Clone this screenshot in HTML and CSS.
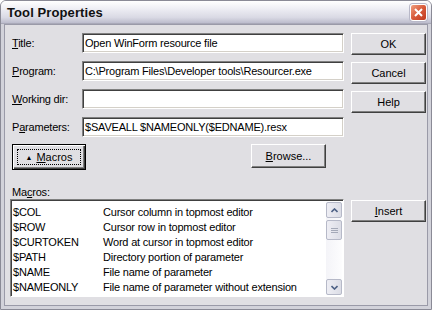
FILE: index.html
```html
<!DOCTYPE html>
<html lang="en">
<head>
  <meta charset="UTF-8">
  <title>Tool Properties</title>
  <link rel="stylesheet" href="styles.css">
</head>
<body>
  <div class="window">
    <div class="titlebar">
      <span class="title">Tool Properties</span>
      <span class="close">
        <svg width="9" height="9" viewBox="0 0 9 9"><path d="M1 1 L8 8 M8 1 L1 8" stroke="#fff" stroke-width="2"/></svg>
      </span>
    </div>

    <div class="client">
      <div class="form">
        <div class="row">
          <label><u>T</u>itle:</label>
          <div class="field">Open WinForm resource file</div>
        </div>
        <div class="row">
          <label><u>P</u>rogram:</label>
          <div class="field">C:\Program Files\Developer tools\Resourcer.exe</div>
        </div>
        <div class="row">
          <label><u>W</u>orking dir:</label>
          <div class="field"></div>
        </div>
        <div class="row">
          <label>P<u>a</u>rameters:</label>
          <div class="field">$SAVEALL $NAMEONLY($EDNAME).resx</div>
        </div>

        <div class="actions">
          <button class="btn btn-default"><span class="focus"><span class="tri">&#9650;</span> <u>M</u>acros</span></button>
          <button class="btn btn-browse"><u>B</u>rowse...</button>
        </div>

        <div class="list-label">Ma<u>c</u>ros:</div>
        <div class="listbox">
          <div class="items">
            <div class="item"><span class="name">$COL</span><span>Cursor column in topmost editor</span></div>
            <div class="item"><span class="name">$ROW</span><span>Cursor row in topmost editor</span></div>
            <div class="item"><span class="name">$CURTOKEN</span><span>Word at cursor in topmost editor</span></div>
            <div class="item"><span class="name">$PATH</span><span>Directory portion of parameter</span></div>
            <div class="item"><span class="name">$NAME</span><span>File name of parameter</span></div>
            <div class="item"><span class="name">$NAMEONLY</span><span>File name of parameter without extension</span></div>
          </div>
          <div class="scrollbar">
            <div class="sb-btn">
              <svg width="7" height="5" viewBox="0 0 7 5"><path d="M0.5 4 L3.5 1 L6.5 4" fill="none" stroke="#4d6185" stroke-width="1.6"/></svg>
            </div>
            <div class="sb-thumb">
              <svg width="7" height="7" viewBox="0 0 7 7"><path d="M0 1.5 H7 M0 3.5 H7 M0 5.5 H7" stroke="#a4a9b8" stroke-width="1"/></svg>
            </div>
            <div class="sb-track"></div>
            <div class="sb-btn">
              <svg width="7" height="5" viewBox="0 0 7 5"><path d="M0.5 1 L3.5 4 L6.5 1" fill="none" stroke="#4d6185" stroke-width="1.6"/></svg>
            </div>
          </div>
        </div>
      </div>

      <div class="side">
        <button class="btn">OK</button>
        <button class="btn">Cancel</button>
        <button class="btn">Help</button>
        <button class="btn btn-insert"><u>I</u>nsert</button>
      </div>
    </div>
  </div>
</body>
</html>
```

FILE: styles.css
```css
body {
  margin: 0;
  font-family: 'Liberation Sans', Arial, sans-serif;
  font-size: 11px;
  letter-spacing: -0.2px;
  color: #000;
}

.window {
  width: 432px;
  height: 310px;
  box-sizing: border-box;
  border: 1px solid #8a8a96;
  border-radius: 6px 6px 0 0;
  overflow: hidden;
  background-color: #e0dfe3;
  display: flex;
  flex-direction: column;
}

.titlebar {
  height: 22px;
  display: flex;
  align-items: center;
  justify-content: space-between;
  padding: 0 4px 0 6px;
  background: linear-gradient(#ffffff, #eeeef4 35%, #d9d9e4 75%, #bcbccc);
  border-bottom: 1px solid #a9a9b8;
}

.title {
  font-size: 13px;
  font-weight: bold;
  color: #111;
  letter-spacing: 0.1px;
}

.close {
  width: 15px;
  height: 15px;
  margin-top: 1px;
  border: 1px solid #fff;
  border-radius: 3px;
  background: linear-gradient(135deg, #f0a080, #d85a3a 50%, #c03a20);
  display: flex;
  align-items: center;
  justify-content: center;
  box-shadow: 0 0 0 1px #b8b8c8;
}

.client {
  flex: 1;
  display: flex;
  gap: 7px;
  padding: 9px 2px 0 6px;
  border: 3px solid #d2d2da;
  border-top: none;
  box-shadow: inset 1px 1px #9a9aa8, inset -1px -1px #9a9aa8;
}

.form {
  width: 334px;
}

.row {
  display: flex;
  align-items: center;
  height: 20px;
  margin-bottom: 8px;
}

.row label {
  width: 70px;
  padding-left: 2px;
}

.field {
  flex: 1;
  height: 20px;
  box-sizing: border-box;
  background-color: #fff;
  border: 1px solid;
  border-color: #808080 #fff #fff #808080;
  box-shadow: inset 1px 1px #404040, inset -1px -1px #d4d0c8;
  padding: 3px 2px 0;
  white-space: nowrap;
  overflow: hidden;
}

.btn {
  font: inherit;
  color: #000;
  background-color: #e0dfe3;
  border: 1px solid;
  border-color: #fff #404040 #404040 #fff;
  box-shadow: inset -1px -1px #808080;
  width: 75px;
  height: 22px;
  padding: 0;
}

.actions {
  display: flex;
  justify-content: space-between;
  align-items: flex-start;
  width: 314px;
  padding-left: 2px;
  margin-top: -1px;
}

.btn-default {
  width: 74px;
  height: 26px;
  border: 1px solid #000;
  box-shadow: inset 1px 1px #fff, inset -1px -1px #404040, inset -2px -2px #808080;
  padding: 4px;
}

.btn-browse {
  height: 24px;
}

.focus {
  display: flex;
  align-items: center;
  justify-content: center;
  height: 100%;
  box-sizing: border-box;
  border: 1px dotted #000;
}

.tri {
  font-size: 7px;
  margin-right: 4px;
}

.list-label {
  margin-top: 16px;
  padding-left: 2px;
  height: 13px;
}

.listbox {
  height: 98px;
  box-sizing: border-box;
  background-color: #fff;
  border: 1px solid;
  border-color: #808080 #fff #fff #808080;
  box-shadow: inset 1px 1px #404040;
  display: flex;
  padding: 2px 1px 1px 2px;
}

.items {
  flex: 1;
  padding-top: 2px;
}

.item {
  display: flex;
  height: 15px;
  align-items: center;
}

.item .name {
  width: 90px;
}

.scrollbar {
  width: 16px;
  display: flex;
  flex-direction: column;
  background: linear-gradient(90deg, #f4f4f8, #fdfdfe);
}

.sb-btn,
.sb-thumb {
  box-sizing: border-box;
  border: 1px solid #b6b9c8;
  border-radius: 2px;
  background: linear-gradient(90deg, #eeeef4, #dcdde6);
  display: flex;
  align-items: center;
  justify-content: center;
}

.sb-btn {
  height: 16px;
}

.sb-thumb {
  height: 20px;
  margin-top: 2px;
}

.sb-track {
  flex: 1;
}

.side {
  display: flex;
  flex-direction: column;
  gap: 7px;
}

.btn-insert {
  margin-top: 80px;
}
```
